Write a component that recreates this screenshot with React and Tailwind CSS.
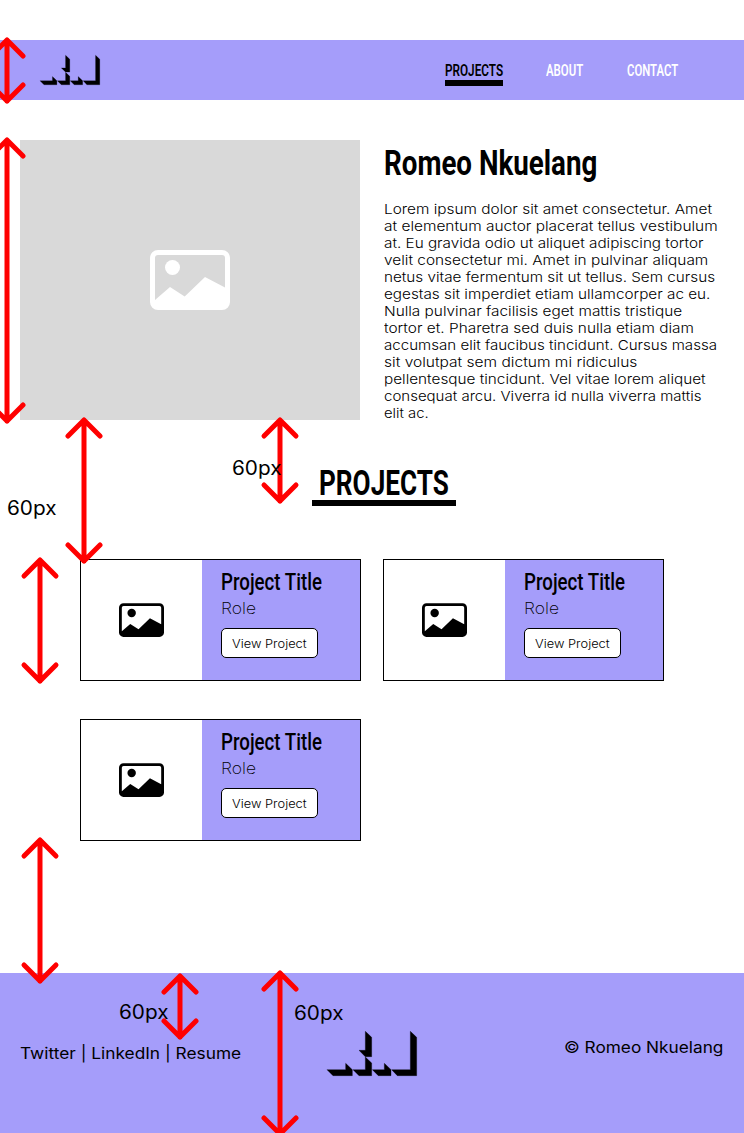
import { useLayoutEffect, useRef, useState } from "react";

// Stretches a single line of text to fill the width of its box.
function FitText({ children, className = "" }) {
  const box = useRef(null);
  const text = useRef(null);
  const [scale, setScale] = useState(1);
  useLayoutEffect(() => {
    setScale(box.current.clientWidth / text.current.offsetWidth);
  }, [children]);
  return (
    <span ref={box} className={`block text-left whitespace-nowrap ${className}`}>
      <span ref={text} className="inline-block origin-left" style={{ transform: `scaleX(${scale})` }}>
        {children}
      </span>
    </span>
  );
}

function Logo({ className }) {
  return (
    <svg viewBox="52 33 270 135" className={`overflow-visible ${className}`} fill="#000" stroke="#000" strokeWidth="1">
      <path d="M52 149H108V130L128 149V167H70Z" />
      <path d="M130 149H167V111L186 129V167H148Z" />
      <path d="M167 34L186 52V110H167L148 91H167Z" />
      <path d="M188 149H224V130L244 149V167H206Z" />
      <path d="M246 149H302V34L321 52V167H263Z" />
    </svg>
  );
}

function PictureIcon({ className }) {
  return (
    <svg viewBox="0 0 80 60" className={className} fill="currentColor">
      <path
        fillRule="evenodd"
        d="M8 0H72A8 8 0 0 1 80 8V52A8 8 0 0 1 72 60H8A8 8 0 0 1 0 52V8A8 8 0 0 1 8 0ZM8 5A3 3 0 0 0 5 8V50L20 37L34.7 46.5L55 27L75 37.500V8A3 3 0 0 0 72 5Z"
      />
      <circle cx="22.500" cy="17.500" r="7.500" />
    </svg>
  );
}

function Arrow({ height, className }) {
  const end = height - 3;
  return (
    <svg
      width="38"
      height={height}
      className={`absolute overflow-visible ${className}`}
      fill="none"
      stroke="#f00"
      strokeWidth="5"
      strokeLinecap="round"
      strokeLinejoin="round"
    >
      <path d={`M19 3V${end}M3 19L19 3L35 19M3 ${end - 16}L19 ${end}L35 ${end - 16}`} />
    </svg>
  );
}

const bio = [
  ["Lorem ipsum dolor sit amet consectetur. Amet", "w-[328px]"],
  ["at elementum auctor placerat tellus vestibulum", "w-[334px]"],
  ["at. Eu gravida odio ut aliquet adipiscing tortor", "w-[320px]"],
  ["velit consectetur mi. Amet in pulvinar aliquam", "w-[324px]"],
  ["netus vitae fermentum sit ut tellus. Sem cursus", "w-[331px]"],
  ["egestas sit imperdiet etiam ullamcorper ac eu.", "w-[326px]"],
  ["Nulla pulvinar facilisis eget mattis tristique", "w-[298px]"],
  ["tortor et. Pharetra sed duis nulla etiam diam", "w-[310px]"],
  ["accumsan elit faucibus tincidunt. Cursus massa", "w-[333px]"],
  ["sit volutpat sem dictum mi ridiculus", "w-[253px]"],
  ["pellentesque tincidunt. Vel vitae lorem aliquet", "w-[322px]"],
  ["consequat arcu. Viverra id nulla viverra mattis", "w-[317px]"],
  ["elit ac.", "w-[45px]"],
];

function ProjectCard() {
  return (
    <article className="flex h-[122px] w-[281px] border border-black">
      <div className="flex w-[121px] items-center justify-center">
        <PictureIcon className="h-[34px] w-[45px]" />
      </div>
      <div className="flex-1 bg-[#a59dfa] pl-[19px] pt-2">
        <h3 className="font-['Roboto',sans-serif] text-[23.5px] leading-7 font-medium">
          <FitText className="w-[101px]">Project Title</FitText>
        </h3>
        <p className="mt-[3px] text-[15.5px] leading-5 font-[250]">
          <FitText className="w-[35px]">Role</FitText>
        </p>
        <button className="mt-[9px] flex h-[30px] w-[97px] items-center rounded-[5px] border border-black bg-white pt-px pl-[10px] text-[11.5px] leading-4 font-[350]">
          <FitText className="w-[75px]">View Project</FitText>
        </button>
      </div>
    </article>
  );
}

export default function App() {
  return (
    <div className="relative h-[1133px] w-[744px] overflow-hidden bg-white pt-10 font-['Inter',sans-serif] text-black">
      <header className="flex h-[60px] items-center bg-[#a59dfa] pl-10">
        <Logo className="h-[30px] w-[60px]" />
        <nav className="ml-[345px] flex h-full items-start pt-[21px] font-['Roboto',sans-serif] text-[16px] leading-5 font-semibold">
          <a className="w-[58px]">
            <FitText className="w-[58px]">PROJECTS</FitText>
            <span className="-mt-px block h-[6px] bg-black" />
          </a>
          <a className="ml-[43px] text-white">
            <FitText className="w-[37px]">ABOUT</FitText>
          </a>
          <a className="ml-11 text-white">
            <FitText className="w-[51px]">CONTACT</FitText>
          </a>
        </nav>
      </header>

      <section className="mt-10 flex h-[280px] gap-6 pl-5">
        <div className="flex h-[280px] w-[340px] items-center justify-center bg-[#d9d9d9] text-white">
          <PictureIcon className="h-[60px] w-20" />
        </div>
        <div>
          <h1 className="h-[61px] pt-[1px] font-['Roboto',sans-serif] text-[35px] leading-[46px] font-bold">
            <FitText className="w-[213px]">Romeo Nkuelang</FitText>
          </h1>
          <p className="text-[13.5px] leading-[17px] font-[350]">
            {bio.map(([line, width]) => (
              <FitText key={line} className={width}>
                {line}
              </FitText>
            ))}
          </p>
        </div>
      </section>

      <main>
        <h2 className="ml-[312px] mt-[41px] w-36 font-['Roboto',sans-serif] text-[35px] leading-[46px] font-bold">
          <FitText className="ml-[7px] w-[130px]">PROJECTS</FitText>
          <span className="-mt-[7px] block h-[6px] bg-black" />
        </h2>
        <div className="ml-20 mt-[53px] grid grid-cols-[281px_281px] gap-x-[22px] gap-y-[38px]">
          <ProjectCard />
          <ProjectCard />
          <ProjectCard />
        </div>
      </main>

      <footer className="mt-[132px] flex h-40 items-start bg-[#a59dfa] pl-5 text-[15.5px] leading-5 font-normal">
        <FitText className="mt-[71px] w-[221px]">Twitter | LinkedIn | Resume</FitText>
        <Logo className="ml-[86px] mt-[58px] h-[45px] w-[90px]" />
        <FitText className="ml-[147px] mt-[65px] w-[159px]">© Romeo Nkuelang</FitText>
      </footer>

      <Arrow height={67} className="left-[-12px] top-[37px]" />
      <Arrow height={287} className="left-[-12px] top-[137px]" />
      <Arrow height={147} className="left-[65px] top-[417px]" />
      <Arrow height={87} className="left-[261px] top-[417px]" />
      <Arrow height={127} className="left-[21px] top-[557px]" />
      <Arrow height={147} className="left-[21px] top-[837px]" />
      <Arrow height={67} className="left-[161px] top-[973px]" />
      <Arrow height={167} className="left-[261px] top-[970px]" />

      <div className="text-[19.5px] leading-6 font-normal">
        <FitText className="absolute left-[7px] top-[496px] w-[50px]">60px</FitText>
        <FitText className="absolute left-[232px] top-[456px] w-[50px]">60px</FitText>
        <FitText className="absolute left-[119px] top-[1000px] w-[50px]">60px</FitText>
        <FitText className="absolute left-[294px] top-[1001px] w-[50px]">60px</FitText>
      </div>
    </div>
  );
}
